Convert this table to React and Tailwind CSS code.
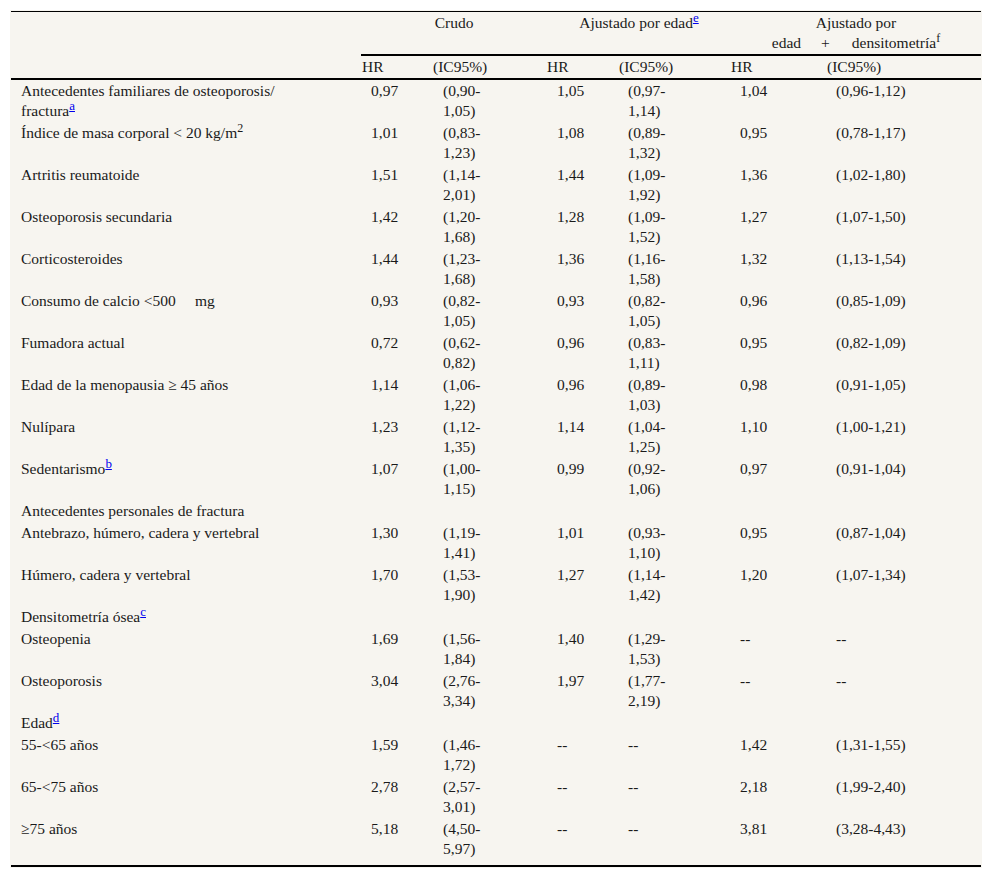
import React from 'react';

const rows = [
  { label: <>Antecedentes familiares de osteoporosis/<br />fractura<Ref>a</Ref></>, v: ['0,97', '(0,90-', '1,05)', '1,05', '(0,97-', '1,14)', '1,04', '(0,96-1,12)'] },
  { label: <>Índice de masa corporal &lt; 20 kg/m<sup className="text-[12px]">2</sup></>, v: ['1,01', '(0,83-', '1,23)', '1,08', '(0,89-', '1,32)', '0,95', '(0,78-1,17)'] },
  { label: 'Artritis reumatoide', v: ['1,51', '(1,14-', '2,01)', '1,44', '(1,09-', '1,92)', '1,36', '(1,02-1,80)'] },
  { label: 'Osteoporosis secundaria', v: ['1,42', '(1,20-', '1,68)', '1,28', '(1,09-', '1,52)', '1,27', '(1,07-1,50)'] },
  { label: 'Corticosteroides', v: ['1,44', '(1,23-', '1,68)', '1,36', '(1,16-', '1,58)', '1,32', '(1,13-1,54)'] },
  { label: 'Consumo de calcio <500\u00a0\u00a0\u00a0\u00a0\u00a0mg', v: ['0,93', '(0,82-', '1,05)', '0,93', '(0,82-', '1,05)', '0,96', '(0,85-1,09)'] },
  { label: 'Fumadora actual', v: ['0,72', '(0,62-', '0,82)', '0,96', '(0,83-', '1,11)', '0,95', '(0,82-1,09)'] },
  { label: 'Edad de la menopausia ≥ 45 años', v: ['1,14', '(1,06-', '1,22)', '0,96', '(0,89-', '1,03)', '0,98', '(0,91-1,05)'] },
  { label: 'Nulípara', v: ['1,23', '(1,12-', '1,35)', '1,14', '(1,04-', '1,25)', '1,10', '(1,00-1,21)'] },
  { label: <>Sedentarismo<Ref>b</Ref></>, v: ['1,07', '(1,00-', '1,15)', '0,99', '(0,92-', '1,06)', '0,97', '(0,91-1,04)'] },
  { label: 'Antecedentes personales de fractura' },
  { label: 'Antebrazo, húmero, cadera y vertebral', v: ['1,30', '(1,19-', '1,41)', '1,01', '(0,93-', '1,10)', '0,95', '(0,87-1,04)'] },
  { label: 'Húmero, cadera y vertebral', v: ['1,70', '(1,53-', '1,90)', '1,27', '(1,14-', '1,42)', '1,20', '(1,07-1,34)'] },
  { label: <>Densitometría ósea<Ref>c</Ref></> },
  { label: 'Osteopenia', v: ['1,69', '(1,56-', '1,84)', '1,40', '(1,29-', '1,53)', '--', '--'] },
  { label: 'Osteoporosis', v: ['3,04', '(2,76-', '3,34)', '1,97', '(1,77-', '2,19)', '--', '--'] },
  { label: <>Edad<Ref>d</Ref></> },
  { label: '55-<65 años', v: ['1,59', '(1,46-', '1,72)', '--', '--', null, '1,42', '(1,31-1,55)'] },
  { label: '65-<75 años', v: ['2,78', '(2,57-', '3,01)', '--', '--', null, '2,18', '(1,99-2,40)'] },
  { label: '≥75 años', v: ['5,18', '(4,50-', '5,97)', '--', '--', null, '3,81', '(3,28-4,43)'] },
];

function Ref({ children }) {
  return (
    <sup className="text-[13px]">
      <a href="#" className="text-[#0000ee] underline">{children}</a>
    </sup>
  );
}

function Ci({ a, b }) {
  return (
    <>
      {a}
      {b && <><br />{b}</>}
    </>
  );
}

export default function App() {
  return (
    <div className="min-h-screen bg-white pt-[10px] pl-[10px] font-['Liberation_Serif','Times_New_Roman',serif]">
      <div className="w-[972px] bg-[#f7f5f0] px-[1px] pt-[1px] pb-[1px] text-[15.5px] leading-[20px] text-[#1a1a1a]">
        <table className="w-[970px] table-fixed border-collapse">
          <colgroup>
            <col className="w-[350px]" />
            <col className="w-[72px]" />
            <col className="w-[114px]" />
            <col className="w-[72px]" />
            <col className="w-[112px]" />
            <col className="w-[96px]" />
            <col className="w-[154px]" />
          </colgroup>
          <thead>
            <tr className="border-t border-black">
              <th rowSpan={2} className="p-0"></th>
              <th colSpan={2} className="border-b-2 border-black py-[1px] text-center align-top font-normal">Crudo</th>
              <th colSpan={2} className="border-b-2 border-black py-[1px] text-center align-top font-normal">
                Ajustado por edad<Ref>e</Ref>
              </th>
              <th colSpan={2} className="border-b-2 border-black py-[1px] text-center align-top font-normal">
                Ajustado por
                <br />
                <span>edad</span>
                <span className="ml-[20px]">+</span>
                <span className="ml-[22px]">densitometría<sup className="text-[12px]">f</sup></span>
              </th>
            </tr>
            <tr className="border-b-2 border-black">
              <th className="py-[1px] pl-[1px] text-left font-normal">HR</th>
              <th className="py-[1px] pl-0 text-left font-normal">(IC95%)</th>
              <th className="py-[1px] pl-0 text-left font-normal">HR</th>
              <th className="py-[1px] pl-0 text-left font-normal">(IC95%)</th>
              <th className="py-[1px] pl-0 text-left font-normal">HR</th>
              <th className="py-[1px] pl-0 text-left font-normal">(IC95%)</th>
            </tr>
          </thead>
          <tbody>
            {rows.map((r, i) => {
              const last = i === rows.length - 1;
              const cell = `align-top pt-[1px] ${last ? 'pb-[6px]' : 'pb-[1px]'}`;
              return (
                <tr key={i} className={last ? 'border-b-2 border-black' : ''}>
                  <td className={`${cell} pl-[10px]`}>{r.label}</td>
                  {r.v ? (
                    <>
                      <td className={`${cell} pl-[10px]`}>{r.v[0]}</td>
                      <td className={`${cell} pl-[10px]`}><Ci a={r.v[1]} b={r.v[2]} /></td>
                      <td className={`${cell} pl-[10px]`}>{r.v[3]}</td>
                      <td className={`${cell} pl-[9px]`}><Ci a={r.v[4]} b={r.v[5]} /></td>
                      <td className={`${cell} pl-[9px]`}>{r.v[6]}</td>
                      <td className={`${cell} pl-[9px]`}>{r.v[7]}</td>
                    </>
                  ) : (
                    <td colSpan={6} className={cell}></td>
                  )}
                </tr>
              );
            })}
          </tbody>
        </table>
      </div>
    </div>
  );
}
